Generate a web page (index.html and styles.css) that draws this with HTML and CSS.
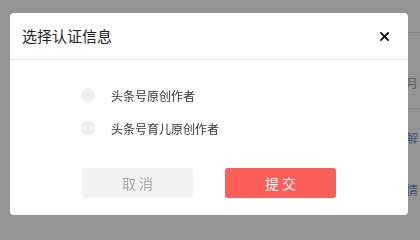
FILE: index.html
```html
<!DOCTYPE html>
<html lang="zh-CN">
<head>
<meta charset="utf-8">
<title>选择认证信息</title>
<link rel="stylesheet" href="styles.css">
</head>
<body>
<div class="page">
  <div class="page-row page-row-first"><span class="muted">月</span></div>
  <div class="page-row"><span class="link">解</span></div>
  <div class="page-row page-row-last"><span class="link">情</span></div>
</div>
<div class="mask"></div>
<div class="dialog">
  <div class="dialog-header">
    <span class="dialog-title">选择认证信息</span>
    <span class="dialog-close">
      <svg width="9" height="9" viewBox="0 0 9 9"><path d="M1 1L8 8M8 1L1 8" stroke="#111" stroke-width="1.8" stroke-linecap="square" fill="none"/></svg>
    </span>
  </div>
  <div class="dialog-body">
    <label class="option"><span class="radio"></span><span class="option-text">头条号原创作者</span></label>
    <label class="option"><span class="radio"></span><span class="option-text">头条号育儿原创作者</span></label>
  </div>
  <div class="dialog-footer">
    <button class="btn btn-cancel">取 消</button>
    <button class="btn btn-submit">提 交</button>
  </div>
</div>
</body>
</html>
```

FILE: styles.css
```css
* { box-sizing: border-box; }
html, body {
  margin: 0;
  padding: 0;
  width: 420px;
  height: 225px;
  overflow: hidden;
  background: #ffffff;
  font-family: "Noto Sans CJK SC", "Noto Sans", sans-serif;
}
.page {
  display: flex;
  flex-direction: column;
  padding-top: 32px;
  padding-left: 406px;
  font-size: 12px;
  line-height: 14px;
}
.page-row {
  border-top: 1px solid #e4e4e4;
  height: 52px;
  padding-top: 22px;
  white-space: nowrap;
}
.page-row-first {
  height: 76px;
  padding-top: 43px;
}
.page-row-last {
  border-top: none;
  padding-top: 23px;
}
.muted { color: #aaaaaa; }
.link { color: #6f8fe0; }
.mask {
  position: fixed;
  inset: 0;
  background: rgba(0, 0, 0, 0.42);
}
.dialog {
  position: absolute;
  left: 10px;
  top: 13px;
  width: 398px;
  height: 202px;
  background: #fff;
  border-radius: 4px;
  display: flex;
  flex-direction: column;
}
.dialog-header {
  height: 47px;
  border-bottom: 1px solid #e8e8e8;
  display: flex;
  align-items: center;
  justify-content: space-between;
  padding: 0 19px 0 12px;
}
.dialog-title {
  font-size: 15px;
  color: #222;
  line-height: 20px;
}
.dialog-close {
  display: flex;
  width: 9px;
  height: 9px;
}
.dialog-body {
  display: flex;
  flex-direction: column;
  gap: 13px;
  padding: 25px 0 0 71px;
}
.option {
  display: flex;
  align-items: center;
  height: 20px;
}
.radio {
  width: 14px;
  height: 14px;
  border-radius: 50%;
  background: #eeeeee;
}
.option-text {
  margin-left: 16px;
  font-size: 12px;
  color: #333;
}
.dialog-footer {
  display: flex;
  justify-content: center;
  gap: 32px;
  margin-top: 30px;
}
.btn {
  width: 111px;
  height: 30px;
  border: none;
  border-radius: 3px;
  font-family: inherit;
  font-size: 14px;
  padding: 0;
}
.btn-cancel {
  background: #f2f2f2;
  color: #aaa;
}
.btn-submit {
  background: #fa5f5a;
  color: #fff;
}
```
